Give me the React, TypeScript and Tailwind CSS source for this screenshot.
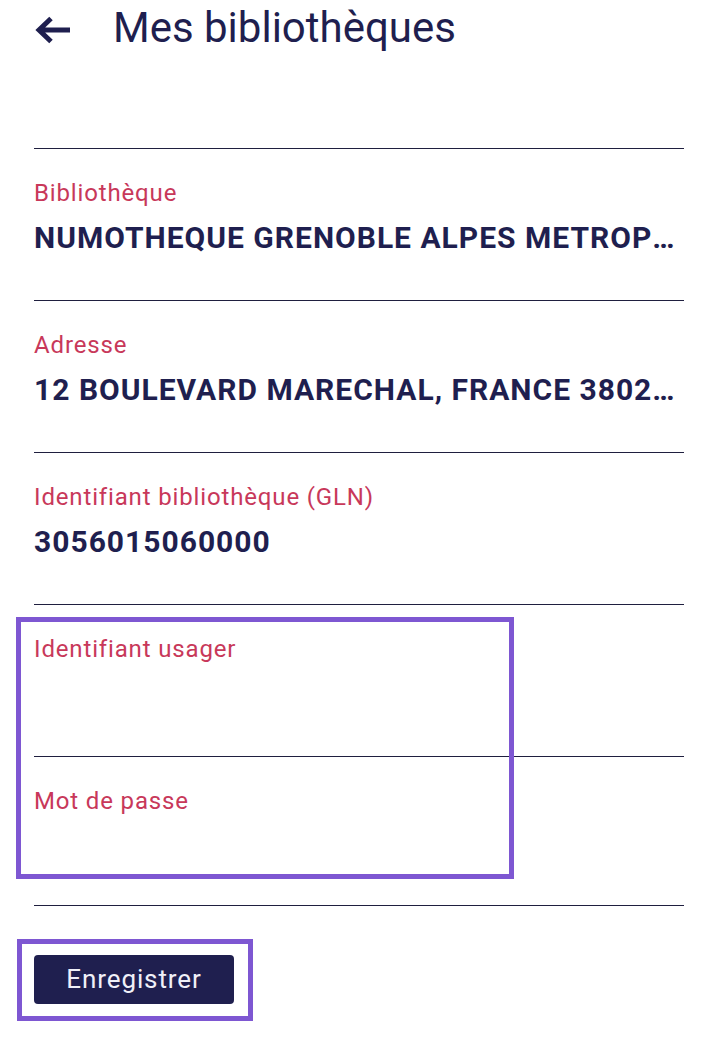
import React from "react";

const Field = ({ label, value }: { label: string; value?: string }) => (
  <div className="h-[152px] border-t border-[#1f1f3f] pt-[30px]">
    <div className="text-[24px] leading-[28px] tracking-[0.85px] text-[#c8385a]">{label}</div>
    {value ? (
      <div className="mt-[13px] truncate text-[30px] font-bold leading-[36px] tracking-[1px] text-[#1f1f4f]">
        {value}
      </div>
    ) : null}
  </div>
);

export default function App() {
  return (
    <div
      className="relative h-[1053px] w-[719px] overflow-hidden bg-white"
      style={{ fontFamily: "Roboto, 'Noto Sans', sans-serif" }}
    >
      <div className="mx-[34px] w-[650px]">
        <div className="flex h-[148px] items-start pt-[3px]">
          <svg width="38" height="30" viewBox="0 0 38 30" className="mt-[12px] shrink-0">
            <path
              d="M36 15H6M17 3.5L5 15l12 11.5"
              fill="none"
              stroke="#1f1f4f"
              strokeWidth="5"
              strokeLinejoin="miter"
            />
          </svg>
          <div className="ml-[41px] text-[42px] leading-[50px] text-[#1f1f4f]">Mes bibliothèques</div>
        </div>
        <Field label="Bibliothèque" value="NUMOTHEQUE GRENOBLE ALPES METROPOLE" />
        <Field label="Adresse" value="12 BOULEVARD MARECHAL, FRANCE 38026 GRENOBLE" />
        <Field label="Identifiant bibliothèque (GLN)" value="3056015060000" />
        <Field label="Identifiant usager" />
        <div className="h-[149px] border-t border-[#1f1f3f] pt-[30px]">
          <div className="text-[24px] leading-[28px] tracking-[0.85px] text-[#c8385a]">Mot de passe</div>
        </div>
        <div className="border-t border-[#1f1f3f] pt-[49px]">
          <button className="flex h-[49px] w-[200px] items-center justify-center rounded-[4px] bg-[#1f1f4f] text-[26px] tracking-[0.9px] text-[#f0f0f8]">
            Enregistrer
          </button>
        </div>
      </div>
      <div className="pointer-events-none absolute left-[16px] top-[617px] h-[262px] w-[498px] border-[5px] border-[#7e57d2]" />
      <div className="pointer-events-none absolute left-[17px] top-[939px] h-[82px] w-[236px] border-[5px] border-[#7e57d2]" />
    </div>
  );
}
